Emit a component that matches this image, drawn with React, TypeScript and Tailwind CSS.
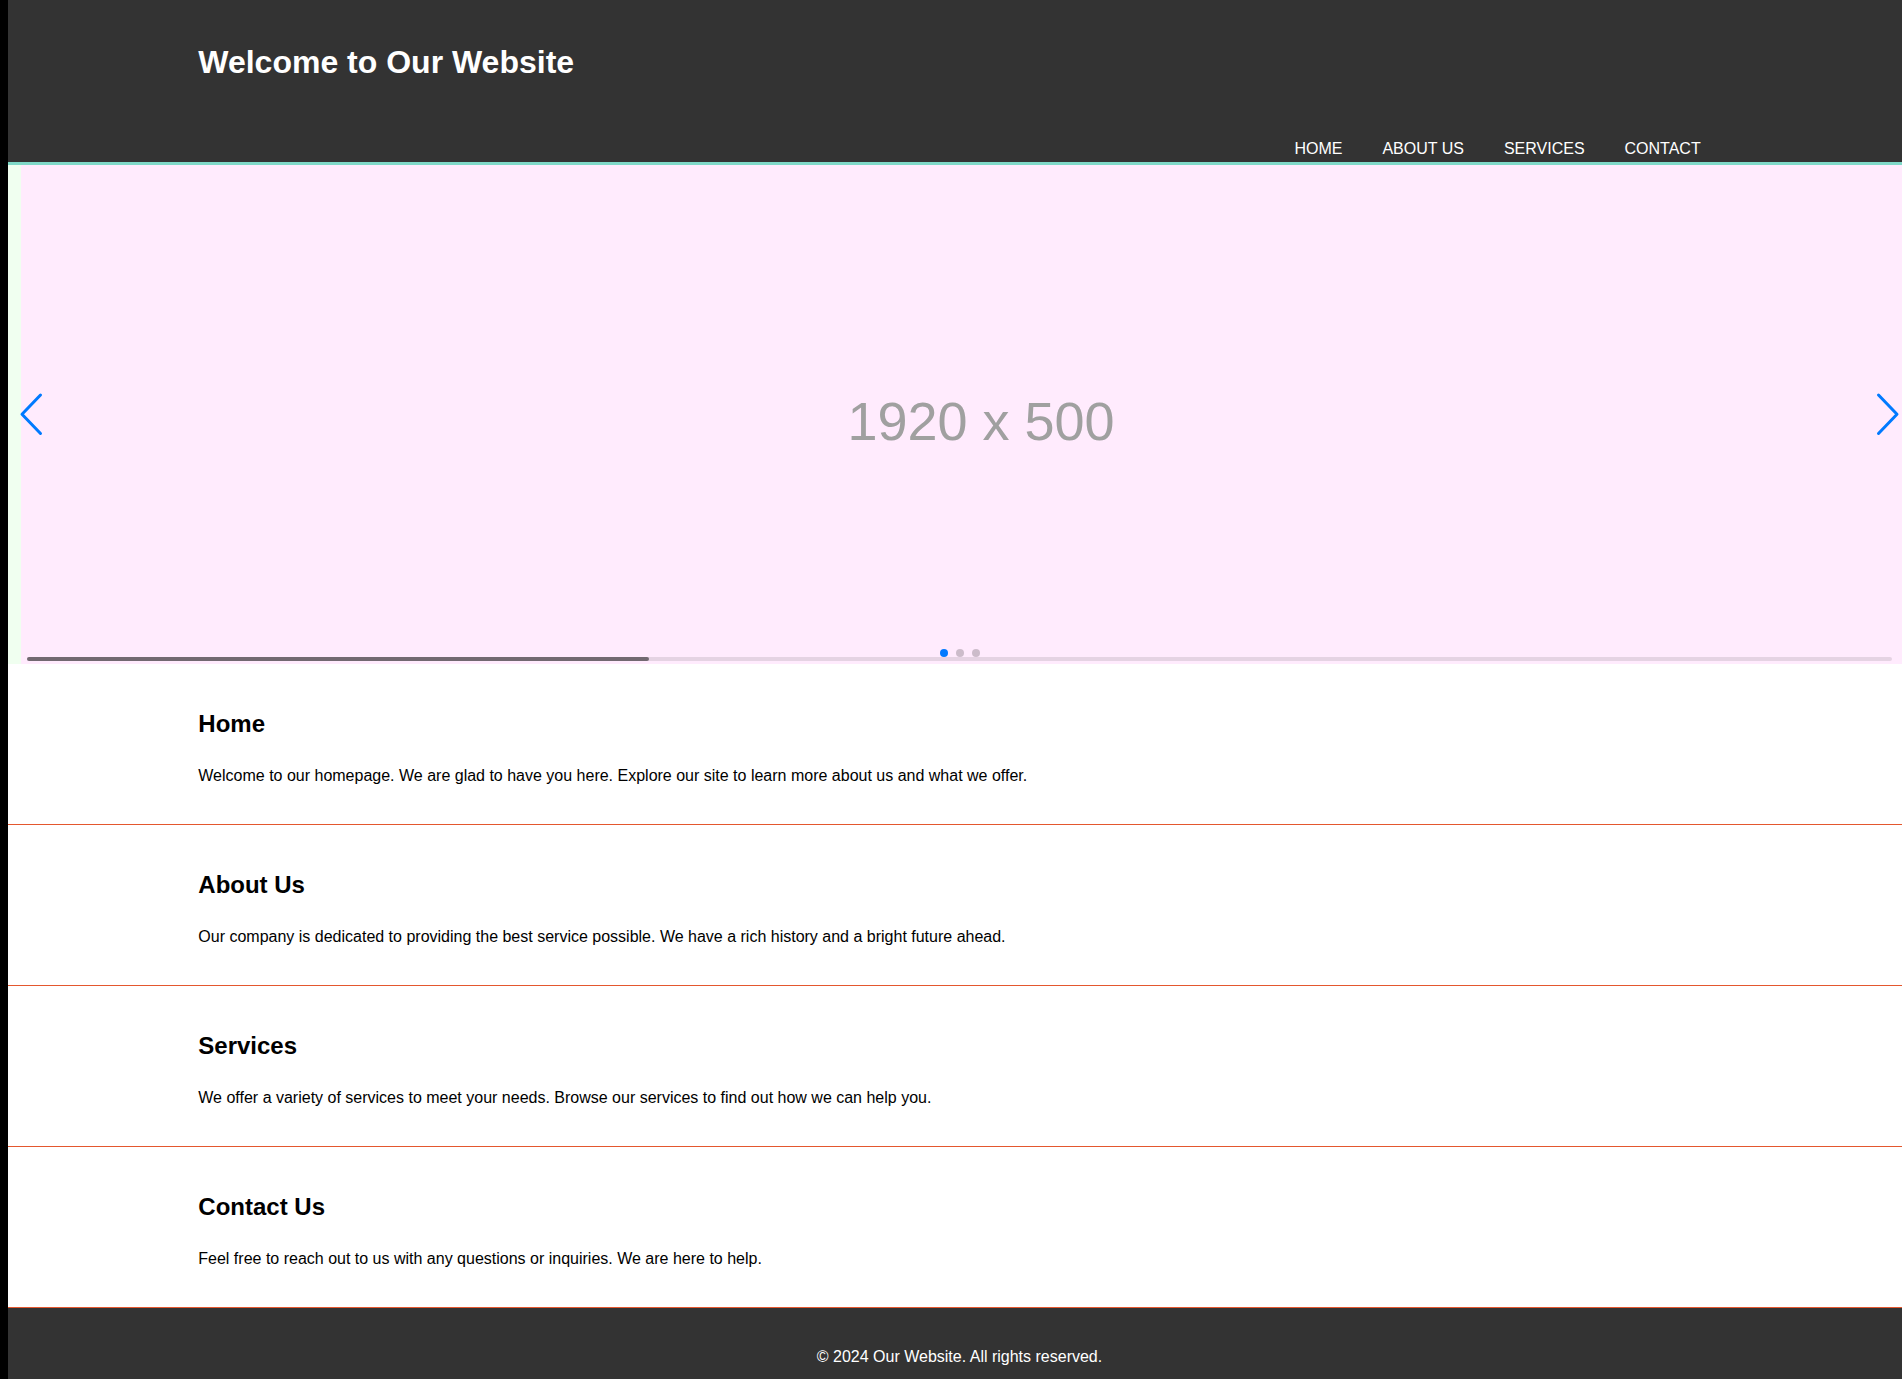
const navLinks = ['HOME', 'ABOUT US', 'SERVICES', 'CONTACT']

const sections = [
  {
    title: 'Home',
    text: 'Welcome to our homepage. We are glad to have you here. Explore our site to learn more about us and what we offer.',
  },
  {
    title: 'About Us',
    text: 'Our company is dedicated to providing the best service possible. We have a rich history and a bright future ahead.',
  },
  {
    title: 'Services',
    text: 'We offer a variety of services to meet your needs. Browse our services to find out how we can help you.',
  },
  {
    title: 'Contact Us',
    text: 'Feel free to reach out to us with any questions or inquiries. We are here to help.',
  },
]

export default function App() {
  return (
    <div className="w-full overflow-hidden bg-black font-['Liberation_Sans',Arial,sans-serif]">
      <div className="flex min-h-screen">
        <div className="w-[8px] shrink-0" />
        <div className="w-[1903px] shrink-0 bg-white">
          {/* Header */}
          <header className="h-[165px] bg-[#333333] border-b-[3px] border-[#7fd9c8] text-white">
            <div className="w-[80%] mx-auto pt-[44px]">
              <h1 className="text-[32px] leading-[37px] font-bold">Welcome to Our Website</h1>
              <nav className="mt-[59px] flex justify-end gap-[40px] mr-[20px]">
                {navLinks.map((link) => (
                  <a key={link} href="#" className="text-[16px] leading-[18px] text-white">
                    {link}
                  </a>
                ))}
              </nav>
            </div>
          </header>

          {/* Slider */}
          <div className="relative h-[499px] bg-[#f0fff0] overflow-hidden">
            <div className="ml-[13px] w-[1920px] h-[499px] bg-[#ffebfd] flex items-center justify-center pt-[14px]">
              <span className="text-[54px] text-[#a0a0a0]">1920 x 500</span>
            </div>

            <button className="absolute left-[10px] top-[226px] w-[26px] h-[46px]">
              <svg viewBox="0 0 26 46" className="w-[26px] h-[46px]" fill="none" stroke="#007aff" strokeWidth="3" strokeLinecap="round" strokeLinejoin="round">
                <path d="M22.5 4 L4 23.3 L22.5 42.5" />
              </svg>
            </button>
            <button className="absolute left-[1867px] top-[226px] w-[26px] h-[46px]">
              <svg viewBox="0 0 26 46" className="w-[26px] h-[46px]" fill="none" stroke="#007aff" strokeWidth="3" strokeLinecap="round" strokeLinejoin="round">
                <path d="M3.5 4 L22 23.3 L3.5 42.5" />
              </svg>
            </button>

            {/* Pagination */}
            <div className="absolute inset-x-0 bottom-[7px] flex justify-center gap-[8px]">
              <span className="w-[8px] h-[8px] rounded-full bg-[#007aff]" />
              <span className="w-[8px] h-[8px] rounded-full bg-black/20" />
              <span className="w-[8px] h-[8px] rounded-full bg-black/20" />
            </div>

            {/* Scrollbar */}
            <div className="absolute left-[1%] w-[98%] bottom-[3px] h-[4px] rounded-[10px] bg-black/10">
              <div className="w-1/3 h-full rounded-[10px] bg-black/50" />
            </div>
          </div>

          {/* Sections */}
          {sections.map((s) => (
            <section key={s.title} className="border-b border-[#e4572e]">
              <div className="w-[80%] mx-auto pt-[46px] pb-[39px]">
                <h2 className="text-[24px] leading-[28px] font-bold text-black">{s.title}</h2>
                <p className="mt-[29px] text-[16px] leading-[18px] text-black">{s.text}</p>
              </div>
            </section>
          ))}

          {/* Footer */}
          <footer className="bg-[#333333] text-white text-center pt-[40px] pb-[40px]">
            <p className="text-[16px] leading-[18px]">© 2024 Our Website. All rights reserved.</p>
          </footer>
        </div>
      </div>
    </div>
  )
}
